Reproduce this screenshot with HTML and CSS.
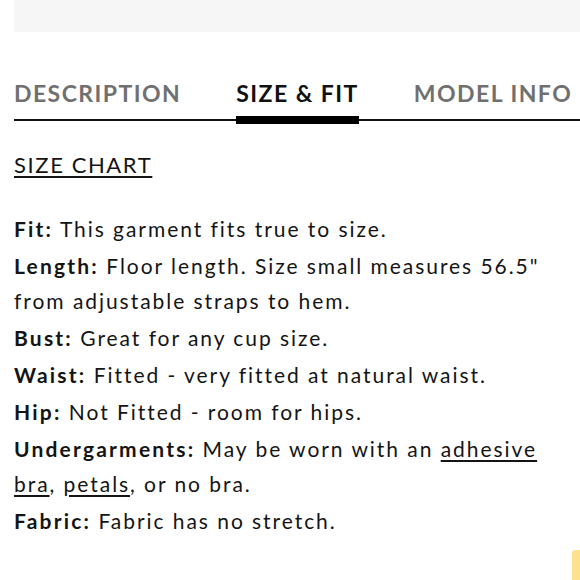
FILE: index.html
```html
<!DOCTYPE html>
<html>
<head>
<meta charset="utf-8">
<link rel="stylesheet" href="styles.css">
</head>
<body>
<div class="page">
  <div class="topbox"></div>
  <nav class="tabs">
    <span class="tab">DESCRIPTION</span>
    <span class="tab active">SIZE &amp; FIT</span>
    <span class="tab">MODEL INFO</span>
  </nav>
  <div class="content">
    <a class="chart">SIZE CHART</a>
    <div class="specs">
      <p><b>Fit:</b> This garment fits true to size.</p>
      <p><b>Length:</b> Floor length. Size small measures 56.5" from adjustable straps to hem.</p>
      <p><b>Bust:</b> Great for any cup size.</p>
      <p><b>Waist:</b> Fitted - very fitted at natural waist.</p>
      <p><b>Hip:</b> Not Fitted - room for hips.</p>
      <p><b>Undergarments:</b> May be worn with an <a>adhesive bra</a>, <a>petals</a>, or no bra.</p>
      <p><b>Fabric:</b> Fabric has no stretch.</p>
    </div>
  </div>
  <div class="chat"></div>
</div>
</body>
</html>
```
FILE: styles.css
```css
html, body {
  margin: 0;
  padding: 0;
  background: #ffffff;
}
.page {
  position: relative;
  width: 580px;
  height: 580px;
  overflow: hidden;
  padding-left: 14px;
  box-sizing: border-box;
  font-family: Lato, "Liberation Sans", sans-serif;
  color: #141414;
}
.topbox {
  height: 32px;
  background: #f6f6f6;
}
.tabs {
  display: flex;
  margin-top: 44px;
  border-bottom: 2px solid #111;
  height: 45px;
  box-sizing: border-box;
  white-space: nowrap;
}
.tab {
  font-size: 23px;
  font-weight: 700;
  letter-spacing: 1.45px;
  color: #707070;
  line-height: 34px;
  position: relative;
}
.tab + .tab {
  margin-left: 55px;
}
.tab.active {
  color: #111;
}
.tab.active::after {
  content: "";
  position: absolute;
  left: 0;
  right: 0;
  bottom: -5px;
  height: 8px;
  background: #000;
}
.content {
  padding-top: 29px;
}
.chart {
  display: inline-block;
  font-size: 22px;
  letter-spacing: 1.6px;
  text-decoration: underline;
  text-underline-offset: 3px;
  text-decoration-thickness: 1.5px;
  line-height: 30px;
  color: #141414;
}
.specs {
  margin-top: 31px;
  width: 556px;
}
.specs p {
  margin: 0 0 2px 0;
  font-size: 21px;
  line-height: 35px;
  letter-spacing: 1.95px;
}
.specs b {
  font-weight: 700;
  letter-spacing: 2.2px;
}
.specs a {
  text-decoration: underline;
  text-underline-offset: 3px;
}
.chat {
  position: absolute;
  right: 0;
  top: 550px;
  width: 8px;
  height: 30px;
  background: #fde18c;
  border-radius: 3px 0 0 0;
}
```
